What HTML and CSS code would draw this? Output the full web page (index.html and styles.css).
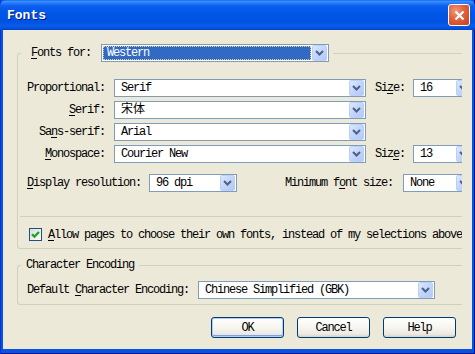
FILE: index.html
```html
<!DOCTYPE html>
<html lang="en">
<head>
  <meta charset="UTF-8" />
  <title>Fonts</title>
  <link rel="stylesheet" href="styles.css">
</head>
<body>
  <div class="window">
    <div class="titlebar">
      <span class="title">Fonts</span>
      <span class="close-btn">
        <svg width="11" height="11" viewBox="0 0 11 11"><path d="M1.5 1.5l8 8M9.5 1.5l-8 8" stroke="#fff" stroke-width="2.2" fill="none"/></svg>
      </span>
    </div>
    <div class="client">
      <fieldset class="group">
        <legend class="caption caption-combo">
          <span><u>F</u>onts for:</span>
          <div class="combo combo-lang">
            <span class="value"><span class="sel">Western</span></span>
            <span class="drop"><svg width="9" height="6" viewBox="0 0 9 6"><path d="M1 1l3.5 3.5L8 1" fill="none" stroke="#4d6185" stroke-width="2"/></svg></span>
          </div>
        </legend>
        <div class="group-body fonts-body">
          <div class="font-grid">
            <span class="lbl">Proportional:</span>
            <div class="combo">
              <span class="value">Serif</span>
              <span class="drop"><svg width="9" height="6" viewBox="0 0 9 6"><path d="M1 1l3.5 3.5L8 1" fill="none" stroke="#4d6185" stroke-width="2"/></svg></span>
            </div>
            <span class="lbl-size">Si<u>z</u>e:</span>
            <div class="combo">
              <span class="value">16</span>
              <span class="drop"><svg width="9" height="6" viewBox="0 0 9 6"><path d="M1 1l3.5 3.5L8 1" fill="none" stroke="#4d6185" stroke-width="2"/></svg></span>
            </div>

            <span class="lbl"><u>S</u>erif:</span>
            <div class="combo">
              <span class="value cjk">宋体</span>
              <span class="drop"><svg width="9" height="6" viewBox="0 0 9 6"><path d="M1 1l3.5 3.5L8 1" fill="none" stroke="#4d6185" stroke-width="2"/></svg></span>
            </div>

            <span class="lbl">Sa<u>n</u>s-serif:</span>
            <div class="combo">
              <span class="value">Arial</span>
              <span class="drop"><svg width="9" height="6" viewBox="0 0 9 6"><path d="M1 1l3.5 3.5L8 1" fill="none" stroke="#4d6185" stroke-width="2"/></svg></span>
            </div>

            <span class="lbl"><u>M</u>onospace:</span>
            <div class="combo">
              <span class="value">Courier New</span>
              <span class="drop"><svg width="9" height="6" viewBox="0 0 9 6"><path d="M1 1l3.5 3.5L8 1" fill="none" stroke="#4d6185" stroke-width="2"/></svg></span>
            </div>
            <span class="lbl-size">Siz<u>e</u>:</span>
            <div class="combo">
              <span class="value">13</span>
              <span class="drop"><svg width="9" height="6" viewBox="0 0 9 6"><path d="M1 1l3.5 3.5L8 1" fill="none" stroke="#4d6185" stroke-width="2"/></svg></span>
            </div>
          </div>

          <div class="res-row">
            <span><u>D</u>isplay resolution:</span>
            <div class="combo combo-res">
              <span class="value">96 dpi</span>
              <span class="drop"><svg width="9" height="6" viewBox="0 0 9 6"><path d="M1 1l3.5 3.5L8 1" fill="none" stroke="#4d6185" stroke-width="2"/></svg></span>
            </div>
            <span class="lbl-min">Minimum f<u>o</u>nt size:</span>
            <div class="combo combo-min">
              <span class="value">None</span>
              <span class="drop"><svg width="9" height="6" viewBox="0 0 9 6"><path d="M1 1l3.5 3.5L8 1" fill="none" stroke="#4d6185" stroke-width="2"/></svg></span>
            </div>
          </div>

          <div class="sep"></div>

          <div class="check-row">
            <span class="checkbox">
              <svg width="11" height="11" viewBox="0 0 11 11"><path d="M2 5.2l2.4 2.4L9 3" fill="none" stroke="#21a121" stroke-width="2.2"/></svg>
            </span>
            <span><u>A</u>llow pages to choose their own fonts, instead of my selections above</span>
          </div>
        </div>
      </fieldset>

      <fieldset class="group group-enc">
        <legend class="caption">Character Encoding</legend>
        <div class="group-body enc-body">
          <span>Default <u>C</u>haracter Encoding:</span>
          <div class="combo combo-enc">
            <span class="value">Chinese Simplified (GBK)</span>
            <span class="drop"><svg width="9" height="6" viewBox="0 0 9 6"><path d="M1 1l3.5 3.5L8 1" fill="none" stroke="#4d6185" stroke-width="2"/></svg></span>
          </div>
        </div>
      </fieldset>

      <div class="buttons">
        <button class="btn btn-default">OK</button>
        <button class="btn">Cancel</button>
        <button class="btn">Help</button>
      </div>
    </div>
  </div>
</body>
</html>
```

FILE: styles.css
```css
* {
  box-sizing: border-box;
}
body {
  margin: 0;
  width: 475px;
  height: 354px;
  overflow: hidden;
  font-family: "Liberation Mono", "Noto Sans CJK SC", monospace;
  font-size: 12px;
  line-height: 14px;
  letter-spacing: -1.2px;
  color: #000;
  background: #fff;
}
u {
  text-underline-offset: 2px;
}
.window {
  width: 475px;
  height: 354px;
  display: flex;
  flex-direction: column;
  background: #0a52e0;
  box-shadow: inset 1px 0 #0831d9, inset -1px 0 #00138c, inset 0 -1px #00138c;
}
.titlebar {
  height: 30px;
  flex: none;
  display: flex;
  align-items: center;
  justify-content: space-between;
  padding: 0 5px 0 7px;
  background: linear-gradient(to bottom, #0058ee 0, #3d95ff 1px, #2a7cf8 3px, #0a5ff0 6px, #0055e5 14px, #0053e0 22px, #0a5deb 26px, #0044cc 30px);
  border-radius: 6px 6px 0 0;
}
.title {
  color: #fff;
  font-weight: bold;
  font-size: 13px;
  letter-spacing: 0;
  text-shadow: 1px 1px #0a1883;
  margin-top: 1px;
}
.close-btn {
  width: 22px;
  height: 22px;
  display: flex;
  align-items: center;
  justify-content: center;
  border: 1px solid #fff;
  border-radius: 3px;
  background: radial-gradient(circle at 35% 30%, #f09a7c 0, #e2603a 45%, #c4401a 100%);
}
.client {
  flex: 1;
  margin: 0 3px 5px;
  padding: 14px 0 0 14px;
  background: #ece9d8;
}

/* group boxes, cut off at the right side of the dialog */
.group {
  margin: 0;
  padding: 0;
  width: 445px;
  min-width: 0;
  border: 1px solid #d0d0bf;
  border-right: none;
  border-radius: 3px 0 0 3px;
}
.group-body {
  overflow: hidden;
}
.caption {
  margin-left: 3px;
  padding: 0 5px;
  height: 14px;
}
.caption-combo {
  display: flex;
  align-items: center;
  gap: 10px;
  height: 18px;
  padding: 0 4px 0 10px;
}
.fonts-body {
  padding: 17px 0 7px 9px;
}
.font-grid {
  display: grid;
  grid-template-columns: 78px 252px 29px 60px;
  grid-auto-rows: 18px;
  column-gap: 9px;
  row-gap: 4px;
  align-items: center;
}
.font-grid .lbl {
  grid-column: 1;
  text-align: right;
  white-space: nowrap;
}
.lbl-size {
  white-space: nowrap;
}
.res-row {
  display: flex;
  align-items: center;
  height: 18px;
  margin-top: 11px;
  white-space: nowrap;
}
.res-row > * {
  flex: none;
}
.combo-res {
  width: 88px;
  margin-left: 8px;
}
.lbl-min {
  margin-left: 48px;
}
.res-row .combo-min {
  width: 70px;
  margin-left: 10px;
}
.sep {
  margin: 24px 0 0 -7px;
  border-top: 1px solid #d0d0bf;
}
.check-row {
  display: flex;
  align-items: center;
  gap: 6px;
  margin-top: 11px;
  padding-left: 2px;
  height: 13px;
  white-space: nowrap;
}
.checkbox {
  width: 13px;
  height: 13px;
  flex: none;
  display: flex;
  align-items: center;
  justify-content: center;
  border: 1px solid #1c5180;
  background: linear-gradient(135deg, #dcdcd7, #fbfbf9);
}
.group-enc {
  margin-top: 9px;
}
.enc-body {
  display: flex;
  align-items: center;
  gap: 9px;
  padding: 9px 0 5px 9px;
  white-space: nowrap;
}
.combo-enc {
  width: 237px;
}

/* combo boxes */
.combo {
  display: flex;
  align-items: stretch;
  height: 18px;
  border: 1px solid #7f9db9;
  background: #fff;
  white-space: nowrap;
}
.combo-lang {
  width: 228px;
}
.combo .value {
  flex: 1;
  display: flex;
  align-items: center;
  padding-left: 6px;
  overflow: hidden;
}
.combo .cjk {
  letter-spacing: 0;
}
.combo-lang .value {
  padding: 1px;
}
.combo-lang .sel {
  flex: 1;
  align-self: stretch;
  display: flex;
  align-items: center;
  padding-left: 4px;
  color: #fff;
  background: #316ac5;
  outline: 1px dotted #f0d080;
  outline-offset: -1px;
}
.drop {
  width: 15px;
  flex: none;
  display: flex;
  align-items: center;
  justify-content: center;
  margin-right: 1px;
  border: 1px solid #bcd0f6;
  border-radius: 2px;
  background: linear-gradient(135deg, #dde8fe 0, #c4d6fc 45%, #b2c8f6 100%);
}

/* buttons */
.buttons {
  display: flex;
  justify-content: flex-end;
  gap: 13px;
  margin-top: 12px;
  padding-right: 16px;
}
.btn {
  width: 73px;
  height: 21px;
  padding: 0;
  font: inherit;
  letter-spacing: -1.2px;
  color: #000;
  border: 1px solid #003c74;
  border-radius: 3px;
  background: linear-gradient(to bottom, #fff 0, #f6f5f0 50%, #ebe9e1 85%, #d6d0c5 100%);
}
.btn-default {
  box-shadow: inset 0 0 0 1px #b6cdf3, inset 0 -1px 0 1px #7f9fe6;
}
```
